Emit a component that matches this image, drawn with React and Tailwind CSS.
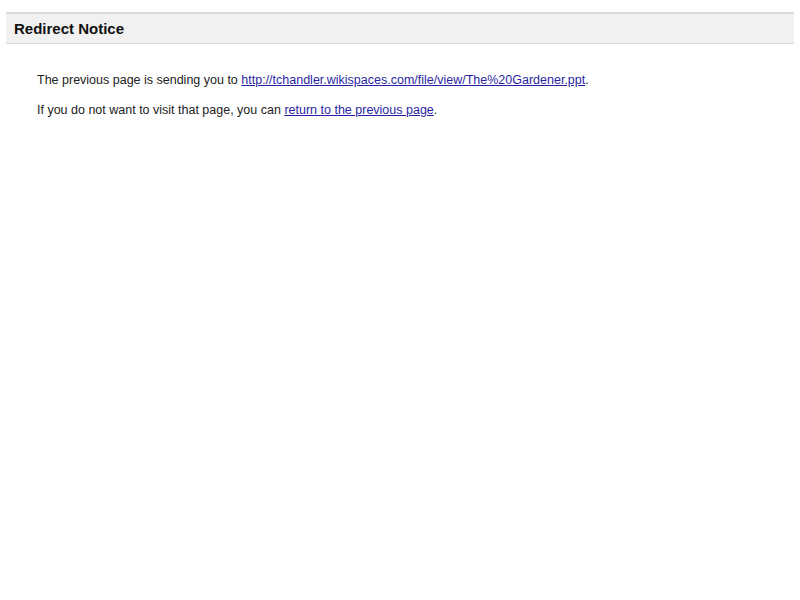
export default function App() {
    return (
        <div className="min-h-[600px] bg-white pt-3 px-[6px] font-['Liberation_Sans',Arial,sans-serif] text-black">
            <div className="h-8 bg-[#f1f1f1] border-t-2 border-b border-[#d9d9d9] flex items-center px-2">
                <h1 className="text-[15px] font-bold text-[#111] pt-px">Redirect Notice</h1>
            </div>
            <div className="pl-[31px] pt-[28px] text-[12.5px] text-[#222] space-y-[14px]">
                <p className="leading-4">
                    The previous page is sending you to{' '}
                    <a href="#" className="text-[#2a1fa3] underline">
                        http://tchandler.wikispaces.com/file/view/The%20Gardener.ppt
                    </a>
                    .
                </p>
                <p className="leading-4">
                    If you do not want to visit that page, you can{' '}
                    <a href="#" className="text-[#2a1fa3] underline">
                        return to the previous page
                    </a>
                    .
                </p>
            </div>
        </div>
    );
}
